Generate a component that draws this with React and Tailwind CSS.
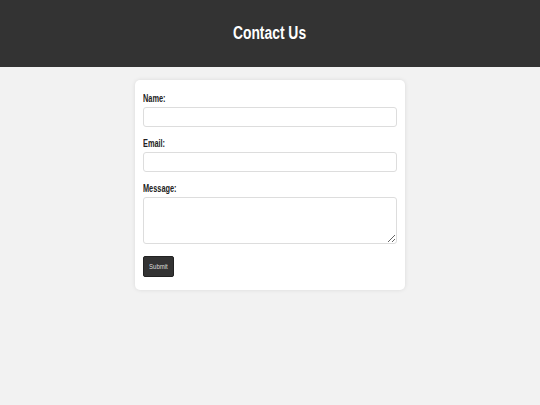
import React from 'react';

const font = { fontFamily: '"Liberation Sans", Arial, sans-serif' };

const Label = ({ children }) => (
  <label className="block text-[10.5px] font-bold text-[#222222] leading-[12px] mb-[3px]">
    <span className="inline-block scale-x-[0.7] origin-left">{children}</span>
  </label>
);

const App = () => {
  return (
    <div className="min-h-[405px] bg-[#f2f2f2] antialiased" style={font}>
      <header className="bg-[#333333] h-[67px] flex items-center justify-center">
        <h1 className="text-white text-[18px] font-bold scale-x-[0.77]">Contact Us</h1>
      </header>
      <div className="flex justify-center pt-[13px]">
        <form className="w-[270px] bg-white rounded-[5px] shadow-[0_0_4px_rgba(0,0,0,0.1)] px-[8px] pt-[12px] pb-[13px] flex flex-col">
          <Label>Name:</Label>
          <input type="text" className="h-[20px] border border-[#dddddd] rounded-[3px] mb-[10px]" />
          <Label>Email:</Label>
          <input type="email" className="h-[20px] border border-[#dddddd] rounded-[3px] mb-[10px]" />
          <Label>Message:</Label>
          <textarea className="h-[47px] border border-[#dddddd] rounded-[3px] mb-[12px] resize-y" />
          <div className="flex">
            <button type="submit" className="bg-[#333333] text-[#dddddd] text-[8px] w-[31px] h-[21px] rounded-[2px] border border-[#222222]">
              <span className="inline-block scale-x-[0.75]">Submit</span>
            </button>
          </div>
        </form>
      </div>
    </div>
  );
};

export default App;
